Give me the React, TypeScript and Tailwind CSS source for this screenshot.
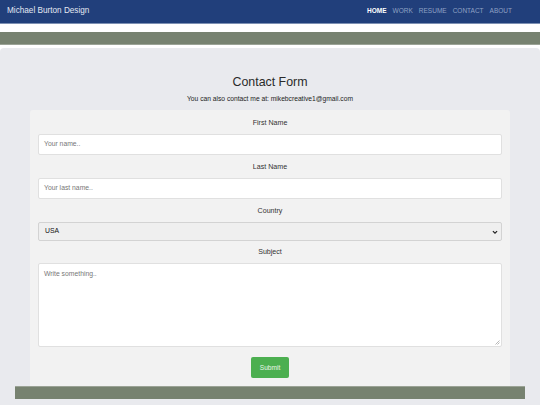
import React from "react";

export default function App() {
  const font = { fontFamily: '"Liberation Sans", Arial, sans-serif' };
  return (
    <div className="w-[540px] h-[405px] overflow-hidden bg-white" style={font}>
      <nav className="h-[24px] bg-[#213f7b] border-b border-[#7d90b3] flex items-center justify-between pl-[7px] pr-[28px]">
        <span className="text-[8.2px] text-[#e3e8f2] leading-none">Michael Burton Design</span>
        <div className="flex items-center gap-[6px] text-[6.5px] leading-none">
          <span className="text-white font-bold">HOME</span>
          <span className="text-[#8fa1c4]">WORK</span>
          <span className="text-[#8fa1c4]">RESUME</span>
          <span className="text-[#8fa1c4]">CONTACT</span>
          <span className="text-[#8fa1c4]">ABOUT</span>
        </div>
      </nav>
      <div className="h-[8px]" />
      <div className="h-[13px] bg-[#778270] border-b border-[#9ba396]" />
      <div className="h-[3px]" />
      <main className="h-[357px] bg-[#e9eaee] rounded-t-[4px] flex flex-col items-center">
        <h1 className="mt-[26px] text-[12.4px] leading-[16px] text-[#2a2a2a] font-normal">Contact Form</h1>
        <p className="mt-[5px] text-[6.7px] leading-[8px] text-[#222]">You can also contact me at: mikebcreative1@gmail.com</p>
        <div className="mt-[7px] w-[480px] bg-[#f2f2f2] rounded-t-[3px] px-[8px] pt-[7px] pb-[8px] flex flex-col">
          <label className="h-[12px] flex items-center justify-center text-[7.1px] text-[#333]">First Name</label>
          <div className="mt-[5px] h-[21px] bg-white border border-[#e0e0e0] rounded-[2px] flex items-center pl-[5px] text-[6.8px] text-[#777]">Your name..</div>
          <label className="mt-[6px] h-[12px] flex items-center justify-center text-[7.1px] text-[#333]">Last Name</label>
          <div className="mt-[5px] h-[21px] bg-white border border-[#e0e0e0] rounded-[2px] flex items-center pl-[5px] text-[6.8px] text-[#777]">Your last name..</div>
          <label className="mt-[6px] h-[12px] flex items-center justify-center text-[7.1px] text-[#333]">Country</label>
          <div className="mt-[5px] h-[19px] bg-[#efefef] border border-[#d3d3d3] rounded-[2px] flex items-center justify-between pl-[6px] pr-[3px] text-[6.8px] text-[#111]">
            <span>USA</span>
            <svg width="6" height="6" viewBox="0 0 10 10">
              <path d="M1.5 3.5 L5 7 L8.5 3.5" fill="none" stroke="#222" strokeWidth="2" />
            </svg>
          </div>
          <label className="mt-[5px] h-[12px] flex items-center justify-center text-[7.1px] text-[#333]">Subject</label>
          <div className="mt-[5px] h-[84px] bg-white border border-[#e0e0e0] rounded-[2px] relative pl-[5px] pt-[5px] text-[6.8px] text-[#777]">
            <span>Write something..</span>
            <svg className="absolute right-[1px] bottom-[1px]" width="5" height="5" viewBox="0 0 5 5">
              <path d="M4.5 0.5 L0.5 4.5 M4.5 2.5 L2.5 4.5" stroke="#999" strokeWidth="0.7" />
            </svg>
          </div>
          <div className="mt-[10px] flex justify-center">
            <div className="w-[38px] h-[21px] bg-[#4caf50] rounded-[2px] flex items-center justify-center text-[6.6px] text-[#e8f5e9]">Submit</div>
          </div>
        </div>
        <div className="w-[510px] h-[13px] bg-[#778270] border-t border-[#9ba396]" />
      </main>
    </div>
  );
}
